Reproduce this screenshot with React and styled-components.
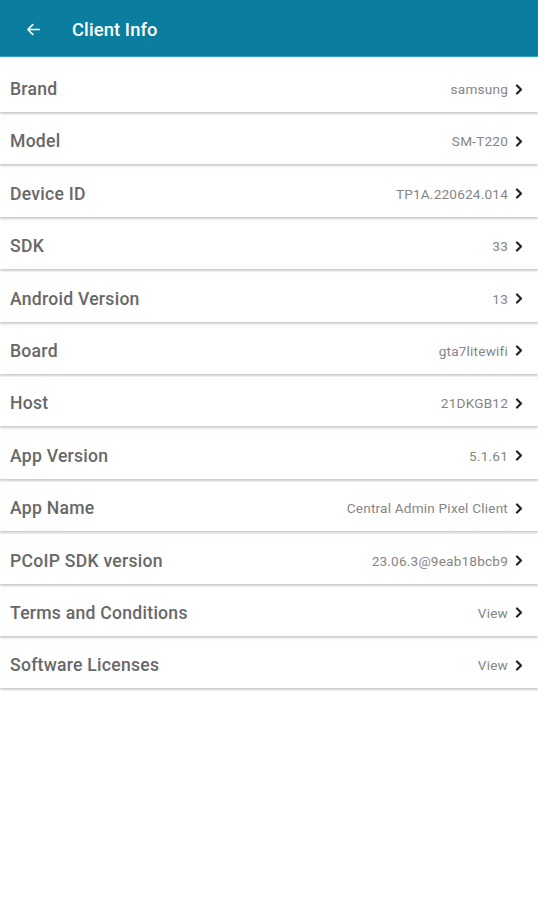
import React from "react";
import styled, { createGlobalStyle } from "styled-components";

const Global = createGlobalStyle`
  html, body { margin: 0; padding: 0; background: #ffffff; }
  body { font-family: Roboto, "Noto Sans", Arial, sans-serif; }
`;

const Page = styled.div`
  width: 538px;
  min-height: 900px;
  background: #ffffff;
`;

const AppBar = styled.header`
  height: 57px;
  background: #0b7e9f;
  display: flex;
  align-items: center;
  padding: 0 0 0 24px;
  box-sizing: border-box;
  border-bottom: 1px solid #2aa3c2;
  gap: 30px;
`;

const BackButton = styled.button`
  width: 18px;
  height: 18px;
  padding: 0;
  border: 0;
  background: transparent;
  display: flex;
  align-items: center;
  justify-content: center;
  margin-top: 2px;
`;

const Title = styled.h1`
  margin: 0;
  margin-top: 2px;
  color: #ffffff;
  font-family: Roboto, sans-serif;
  font-weight: 500;
  font-size: 18.4px;
  letter-spacing: 0.1px;
`;

const List = styled.div`
  display: flex;
  flex-direction: column;
  gap: 6.4px;
  padding-top: 9px;
`;

const Row = styled.div`
  height: 46px;
  background: #ffffff;
  display: flex;
  align-items: center;
  justify-content: space-between;
  padding: 0 15px 0 10px;
  box-shadow: 0 1.5px 2px rgba(0, 0, 0, 0.2), 0 -0.5px 1.5px rgba(0, 0, 0, 0.08);
`;

const Label = styled.span`
  font-family: Roboto, sans-serif;
  font-weight: 500;
  font-size: 17.6px;
  letter-spacing: 0.25px;
  color: #686868;
`;

const Right = styled.div`
  display: flex;
  align-items: center;
  gap: 7px;
`;

const Value = styled.span`
  font-family: Roboto, sans-serif;
  font-size: 13.6px;
  letter-spacing: 0.2px;
  color: #858585;
`;

const Chevron = () => (
  <svg width="8" height="11" viewBox="0 0 8 11">
    <polyline points="2,1.5 6,5.5 2,9.5" fill="none" stroke="#222" strokeWidth="2.2" strokeLinecap="round" strokeLinejoin="round" />
  </svg>
);

const BackArrow = () => (
  <svg width="17" height="17" viewBox="0 0 24 24">
    <path d="M20 12H5M11 5l-7 7 7 7" fill="none" stroke="#fff" strokeWidth="2.4" strokeLinecap="round" strokeLinejoin="round" />
  </svg>
);

const items = [
  ["Brand", "samsung"],
  ["Model", "SM-T220"],
  ["Device ID", "TP1A.220624.014"],
  ["SDK", "33"],
  ["Android Version", "13"],
  ["Board", "gta7litewifi"],
  ["Host", "21DKGB12"],
  ["App Version", "5.1.61"],
  ["App Name", "Central Admin Pixel Client"],
  ["PCoIP SDK version", "23.06.3@9eab18bcb9"],
  ["Terms and Conditions", "View"],
  ["Software Licenses", "View"],
];

export default function App() {
  return (
    <Page>
      <Global />
      <AppBar>
        <BackButton aria-label="Back">
          <BackArrow />
        </BackButton>
        <Title>Client Info</Title>
      </AppBar>
      <List>
        {items.map(([label, value]) => (
          <Row key={label}>
            <Label>{label}</Label>
            <Right>
              <Value>{value}</Value>
              <Chevron />
            </Right>
          </Row>
        ))}
      </List>
    </Page>
  );
}
